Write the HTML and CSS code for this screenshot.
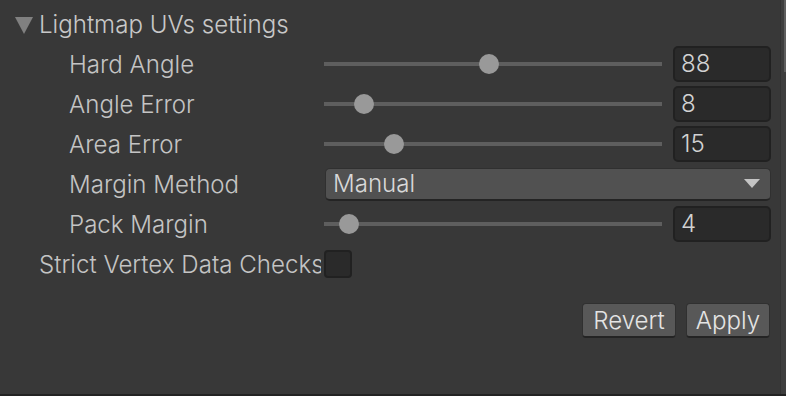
FILE: index.html
```html
<!DOCTYPE html>
<html lang="en">
<head>
  <meta charset="UTF-8" />
  <title>Lightmap UVs settings</title>
  <link rel="stylesheet" href="styles.css">
</head>
<body>
  <div class="window">
    <div class="panel">
      <div class="row header">
        <span class="foldout"></span>
        <span class="title">Lightmap UVs settings</span>
      </div>

      <div class="row">
        <div class="label nested">Hard Angle</div>
        <div class="slider"><div class="track"></div><div class="thumb" style="--v:0.4889"></div></div>
        <div class="field">88</div>
      </div>

      <div class="row">
        <div class="label nested">Angle Error</div>
        <div class="slider"><div class="track"></div><div class="thumb" style="--v:0.0946"></div></div>
        <div class="field">8</div>
      </div>

      <div class="row">
        <div class="label nested">Area Error</div>
        <div class="slider"><div class="track"></div><div class="thumb" style="--v:0.1892"></div></div>
        <div class="field">15</div>
      </div>

      <div class="row">
        <div class="label nested">Margin Method</div>
        <div class="dropdown">
          <span>Manual</span>
          <span class="arrow"></span>
        </div>
      </div>

      <div class="row">
        <div class="label nested">Pack Margin</div>
        <div class="slider"><div class="track"></div><div class="thumb" style="--v:0.0476"></div></div>
        <div class="field">4</div>
      </div>

      <div class="row">
        <div class="label">Strict Vertex Data Checks</div>
        <div class="checkbox"></div>
      </div>

      <div class="buttons">
        <button class="btn btn-revert">Revert</button>
        <button class="btn btn-apply">Apply</button>
      </div>
    </div>

    <div class="scrollbar"><div class="scroll-thumb"></div></div>
  </div>
  <div class="bottom-bar"></div>
</body>
</html>
```

FILE: styles.css
```css
body {
  margin: 0;
  background: #383838;
  font-family: Inter, "Noto Sans", sans-serif;
  font-size: 24.1px;
  font-weight: 350;
  color: #c4c4c4;
  overflow: hidden;
}

.window {
  display: flex;
  height: 394px;
}

.panel {
  flex: 1;
  padding: 4px 9px 0 15px;
}

.row {
  display: flex;
  align-items: center;
  height: 40px;
}

.header .foldout {
  width: 0;
  height: 0;
  border-left: 9px solid transparent;
  border-right: 9px solid transparent;
  border-top: 17px solid #808080;
  margin: 2px 6px 0 0;
}

.title {
  color: #c8c8c8;
}

.label {
  width: 306px;
  margin-right: 3px;
  padding-left: 24px;
  box-sizing: border-box;
  white-space: nowrap;
  overflow: hidden;
  flex-shrink: 0;
}

.label.nested {
  padding-left: 54px;
}

.slider {
  position: relative;
  width: 338px;
  height: 20px;
  margin-right: 11px;
}

.track {
  position: absolute;
  left: 0;
  right: 0;
  top: 8px;
  height: 4px;
  background: #5e5e5e;
}

.thumb {
  position: absolute;
  top: 0;
  left: calc(var(--v) * (100% - 20px));
  width: 20px;
  height: 20px;
  border-radius: 50%;
  background: #999999;
}

.field {
  width: 98px;
  height: 36px;
  box-sizing: border-box;
  background: #2a2a2a;
  border: 2px solid #212121;
  border-radius: 5px;
  padding-left: 6px;
  line-height: 32px;
  color: #d2d2d2;
}

.dropdown {
  display: flex;
  align-items: center;
  justify-content: space-between;
  width: 446px;
  height: 33px;
  margin-left: 1px;
  box-sizing: border-box;
  background: #515151;
  border: 1px solid #303030;
  border-bottom: 2px solid #242424;
  border-radius: 5px;
  padding: 0 10px 0 7px;
  color: #d8d8d8;
}

.arrow {
  width: 0;
  height: 0;
  border-left: 8px solid transparent;
  border-right: 8px solid transparent;
  border-top: 9px solid #c4c4c4;
}

.checkbox {
  width: 28px;
  height: 28px;
  box-sizing: border-box;
  background: #2a2a2a;
  border: 2px solid #212121;
  border-radius: 4px;
}

.buttons {
  display: flex;
  justify-content: flex-end;
  gap: 10px;
  margin-top: 19px;
  padding-right: 1px;
}

.btn {
  height: 35px;
  box-sizing: border-box;
  background: #585858;
  border: 1px solid #303030;
  border-bottom: 2px solid #242424;
  border-radius: 4px;
  font-family: Inter, "Noto Sans", sans-serif;
  font-size: 24.1px;
  font-weight: 350;
  color: #e4e4e4;
  padding: 0;
}

.btn-revert {
  width: 94px;
}

.btn-apply {
  width: 84px;
}

.scrollbar {
  width: 6px;
  background: #3e3e3e;
  border-left: 1px solid #333333;
}

.scroll-thumb {
  margin-left: 3px;
  width: 3px;
  height: 72px;
  background: #5e5e5e;
}

.bottom-bar {
  height: 2px;
  background: #232323;
}
```
